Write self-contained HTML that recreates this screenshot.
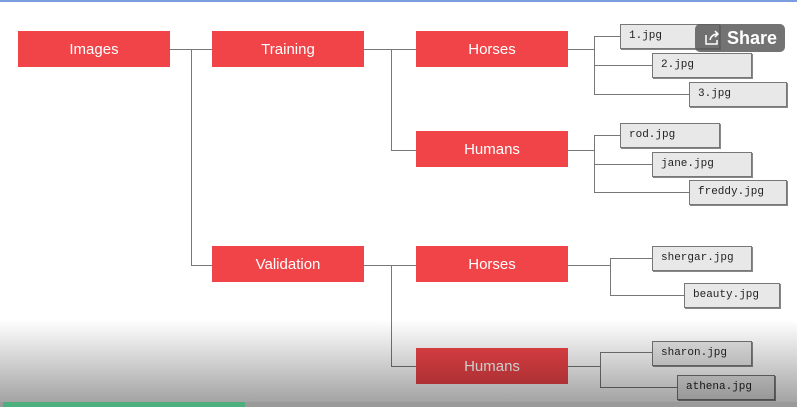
<!DOCTYPE html><html><head><style>
body{margin:0;width:797px;height:407px;overflow:hidden;background:#fff;position:relative;font-family:"Liberation Sans",sans-serif}
.r{position:absolute;width:152px;height:36px;background:#f04448;color:#fff;font-size:15px;display:flex;align-items:center;justify-content:center;z-index:2}
.f{position:absolute;height:25px;background:#e8e8e8;border:1px solid #777;box-sizing:border-box;font-family:"Liberation Mono",monospace;font-size:11px;color:#222;padding:5px 0 0 8px;z-index:2;box-shadow:1px 1px 0 #888}
.l{position:absolute;background:#777;z-index:1}
</style></head><body>
<div style="position:absolute;left:0;top:0;width:797px;height:2px;background:#7a9de0"></div>
<div class="r" style="left:18px;top:31px">Images</div>
<div class="r" style="left:212px;top:31px">Training</div>
<div class="r" style="left:416px;top:31px">Horses</div>
<div class="r" style="left:416px;top:131px">Humans</div>
<div class="r" style="left:212px;top:246px">Validation</div>
<div class="r" style="left:416px;top:246px">Horses</div>
<div class="r" style="left:416px;top:348px">Humans</div>
<div class="l" style="left:170px;top:49px;width:42px;height:1px"></div>
<div class="l" style="left:191px;top:49px;width:1px;height:217px"></div>
<div class="l" style="left:191px;top:265px;width:21px;height:1px"></div>
<div class="l" style="left:364px;top:49px;width:52px;height:1px"></div>
<div class="l" style="left:391px;top:49px;width:1px;height:102px"></div>
<div class="l" style="left:391px;top:150px;width:25px;height:1px"></div>
<div class="l" style="left:364px;top:265px;width:52px;height:1px"></div>
<div class="l" style="left:391px;top:265px;width:1px;height:102px"></div>
<div class="l" style="left:391px;top:366px;width:25px;height:1px"></div>
<div class="l" style="left:568px;top:49px;width:26px;height:1px"></div>
<div class="l" style="left:594px;top:36px;width:1px;height:59px"></div>
<div class="l" style="left:594px;top:36px;width:26px;height:1px"></div>
<div class="l" style="left:594px;top:65px;width:58px;height:1px"></div>
<div class="l" style="left:594px;top:94px;width:95px;height:1px"></div>
<div class="l" style="left:568px;top:150px;width:26px;height:1px"></div>
<div class="l" style="left:594px;top:135px;width:1px;height:58px"></div>
<div class="l" style="left:594px;top:135px;width:26px;height:1px"></div>
<div class="l" style="left:594px;top:164px;width:58px;height:1px"></div>
<div class="l" style="left:594px;top:192px;width:95px;height:1px"></div>
<div class="l" style="left:568px;top:265px;width:42px;height:1px"></div>
<div class="l" style="left:610px;top:258px;width:1px;height:38px"></div>
<div class="l" style="left:610px;top:258px;width:42px;height:1px"></div>
<div class="l" style="left:610px;top:295px;width:74px;height:1px"></div>
<div class="l" style="left:568px;top:366px;width:32px;height:1px"></div>
<div class="l" style="left:600px;top:352px;width:1px;height:36px"></div>
<div class="l" style="left:600px;top:352px;width:52px;height:1px"></div>
<div class="l" style="left:600px;top:387px;width:77px;height:1px"></div>
<div class="f" style="left:620px;top:24px;width:100px">1.jpg</div>
<div class="f" style="left:652px;top:53px;width:100px">2.jpg</div>
<div class="f" style="left:689px;top:82px;width:98px">3.jpg</div>
<div class="f" style="left:620px;top:123px;width:100px">rod.jpg</div>
<div class="f" style="left:652px;top:152px;width:100px">jane.jpg</div>
<div class="f" style="left:689px;top:180px;width:98px">freddy.jpg</div>
<div class="f" style="left:652px;top:246px;width:100px">shergar.jpg</div>
<div class="f" style="left:684px;top:283px;width:96px">beauty.jpg</div>
<div class="f" style="left:652px;top:341px;width:100px">sharon.jpg</div>
<div class="f" style="left:677px;top:375px;width:98px">athena.jpg</div>
<div style="position:absolute;left:0;top:320px;width:797px;height:87px;background:linear-gradient(rgba(0,0,0,0),rgba(0,0,0,0.38));z-index:3"></div>
<div style="position:absolute;left:0;top:402px;width:797px;height:5px;background:#9a9a9a;z-index:4"></div>
<div style="position:absolute;left:3px;top:402px;width:242px;height:5px;background:#4caf7d;z-index:5"></div>
<div style="position:absolute;left:695px;top:24px;width:90px;height:28px;background:rgba(90,90,90,0.85);border-radius:5px;z-index:6;color:#fff;font-weight:bold;font-size:18px;display:flex;align-items:center">
<svg width="18" height="18" viewBox="0 0 18 18" style="margin:0 6px 0 8px"><path d="M3 6v9h11v-4" fill="none" stroke="#fff" stroke-width="1.5"/><path d="M7 11c1-4 4-6 8-6M12 2l3 3-3 3" fill="none" stroke="#fff" stroke-width="1.5"/></svg>Share</div>
</body></html>
